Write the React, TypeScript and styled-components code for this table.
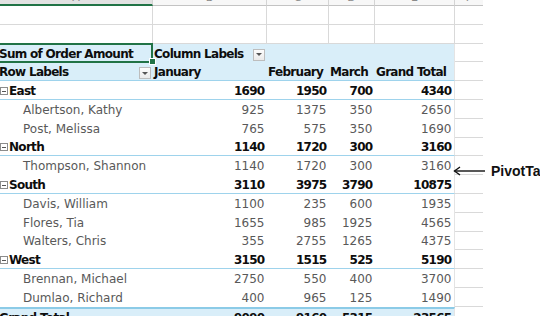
import React from 'react';
import styled, { createGlobalStyle, css } from 'styled-components';

const GlobalStyle = createGlobalStyle`
  html, body {
    margin: 0;
    padding: 0;
    background: #ffffff;
    overflow: hidden;
  }
  body {
    font-family: 'DejaVu Sans', 'Liberation Sans', sans-serif;
  }
`;

const COLS = '153px 114px 62px 46px 80px 28px';
const BLUE_BG = '#d9eef9';
const BLUE_LINE = '#9ed3ec';
const GRID = '#d9d9d9';

type Kind = 'head' | 'headLine' | 'region' | 'item' | 'total';

interface Line {
  name: string;
  values: number[];
}

interface Region extends Line {
  items: Line[];
}

const regions: Region[] = [
  {
    name: 'East',
    values: [1690, 1950, 700, 4340],
    items: [
      { name: 'Albertson, Kathy', values: [925, 1375, 350, 2650] },
      { name: 'Post, Melissa', values: [765, 575, 350, 1690] },
    ],
  },
  {
    name: 'North',
    values: [1140, 1720, 300, 3160],
    items: [{ name: 'Thompson, Shannon', values: [1140, 1720, 300, 3160] }],
  },
  {
    name: 'South',
    values: [3110, 3975, 3790, 10875],
    items: [
      { name: 'Davis, William', values: [1100, 235, 600, 1935] },
      { name: 'Flores, Tia', values: [1655, 985, 1925, 4565] },
      { name: 'Walters, Chris', values: [355, 2755, 1265, 4375] },
    ],
  },
  {
    name: 'West',
    values: [3150, 1515, 525, 5190],
    items: [
      { name: 'Brennan, Michael', values: [2750, 550, 400, 3700] },
      { name: 'Dumlao, Richard', values: [400, 965, 125, 1490] },
    ],
  },
];

const grandTotal = [9090, 9160, 5315, 23565];
const months = ['January', 'February', 'March', 'Grand Total'];

const App = (): JSX.Element => {
  return (
    <>
      <GlobalStyle />
      <Page>
        <ColumnHeads>
          {['A', 'B', 'C', 'D', 'E', 'F'].map((letter, i) => (
            <ColHead key={letter} $selected={i === 0} $last={i === 5}>
              <span>{letter}</span>
            </ColHead>
          ))}
        </ColumnHeads>

        {[0, 1].map((r) => (
          <SheetRow key={r}>
            {[0, 1, 2, 3, 4, 5].map((c) => (
              <GridCell key={c} $last={c === 5} />
            ))}
          </SheetRow>
        ))}

        <SheetRow>
          <PivotCell $kind="head" $selected>
            <Label>Sum of Order Amount</Label>
          </PivotCell>
          <PivotCell $kind="head" $pad>
            <Label>Column Labels</Label>
            <FilterButton />
          </PivotCell>
          <PivotCell $kind="head" />
          <PivotCell $kind="head" />
          <PivotCell $kind="head" $edge />
          <GridCell $last />
        </SheetRow>

        <SheetRow>
          <PivotCell $kind="headLine">
            <Label>Row Labels</Label>
            <FilterButton />
          </PivotCell>
          {months.map((m, i) => (
            <PivotCell key={m} $kind="headLine" $pad $edge={i === 3}>
              <Label>{m}</Label>
            </PivotCell>
          ))}
          <GridCell $last />
        </SheetRow>

        {regions.map((region) => (
          <React.Fragment key={region.name}>
            <SheetRow>
              <PivotCell $kind="region">
                <Collapse />
                <Label>{region.name}</Label>
              </PivotCell>
              {region.values.map((v, i) => (
                <PivotCell key={i} $kind="region" $num $edge={i === 3}>
                  {v}
                </PivotCell>
              ))}
              <GridCell $last />
            </SheetRow>
            {region.items.map((item) => (
              <SheetRow key={item.name}>
                <PivotCell $kind="item" $indent>
                  <Label>{item.name}</Label>
                </PivotCell>
                {item.values.map((v, i) => (
                  <PivotCell key={i} $kind="item" $num $edge={i === 3}>
                    {v}
                  </PivotCell>
                ))}
                <GridCell $last />
              </SheetRow>
            ))}
          </React.Fragment>
        ))}

        <SheetRow>
          <PivotCell $kind="total">
            <Label>Grand Total</Label>
          </PivotCell>
          {grandTotal.map((v, i) => (
            <PivotCell key={i} $kind="total" $num $edge={i === 3}>
              {v}
            </PivotCell>
          ))}
          <GridCell $last />
        </SheetRow>

        <Callout>
          <svg width="32" height="10" viewBox="0 0 32 10">
            <line x1="1.5" y1="5" x2="32" y2="5" stroke="#111" strokeWidth="1.4" />
            <polyline
              points="7,1 1.5,5 7,9"
              fill="none"
              stroke="#111"
              strokeWidth="1.4"
            />
          </svg>
          <CalloutText>PivotTable</CalloutText>
        </Callout>
      </Page>
    </>
  );
};

const Page = styled.div`
  position: relative;
  width: 540px;
  height: 316px;
  overflow: hidden;
  background: #ffffff;
`;

const ColumnHeads = styled.div`
  display: grid;
  grid-template-columns: ${COLS};
  height: 6px;
`;

const ColHead = styled.div<{ $selected?: boolean; $last?: boolean }>`
  box-sizing: border-box;
  height: 6px;
  overflow: hidden;
  text-align: center;
  background: ${(p) => (p.$selected ? '#e2e2e2' : '#f7f7f7')};
  border-bottom: ${(p) => (p.$selected ? '2px solid #217346' : '1.5px solid #c3c3c3')};
  border-right: ${(p) => (p.$last ? 'none' : '1px solid #d4d4d4')};
  color: #8a8a8a;
  font-size: 11px;
  line-height: 6px;
  span {
    display: block;
    margin-top: -5px;
  }
`;

const SheetRow = styled.div`
  display: grid;
  grid-template-columns: ${COLS};
  height: 18.8px;
`;

const GridCell = styled.div<{ $last?: boolean }>`
  box-sizing: border-box;
  height: 18.8px;
  border-bottom: 1px solid ${GRID};
  border-right: ${(p) => (p.$last ? 'none' : `1px solid ${GRID}`)};
`;

const kindStyles: Record<Kind, ReturnType<typeof css>> = {
  head: css`
    background: ${BLUE_BG};
  `,
  headLine: css`
    background: ${BLUE_BG};
    border-bottom: 1px solid ${BLUE_LINE};
  `,
  region: css`
    background: #ffffff;
    border-bottom: 1px solid ${BLUE_LINE};
  `,
  item: css`
    background: #ffffff;
    color: #595959;
    font-weight: 400;
    letter-spacing: 0;
  `,
  total: css`
    background: ${BLUE_BG};
    border-top: 2px solid #8ccbe7;
  `,
};

const PivotCell = styled.div<{
  $kind: Kind;
  $num?: boolean;
  $pad?: boolean;
  $indent?: boolean;
  $edge?: boolean;
  $selected?: boolean;
}>`
  box-sizing: border-box;
  height: 18.8px;
  display: flex;
  align-items: center;
  justify-content: ${(p) => (p.$num ? 'flex-end' : 'flex-start')};
  padding-left: ${(p) => (p.$indent ? '24px' : p.$pad ? '2px' : '0')};
  padding-right: ${(p) => (p.$num ? '2.5px' : '0')};
  padding-top: 1px;
  white-space: nowrap;
  font-size: 12px;
  line-height: 18px;
  color: #0d0d0d;
  font-weight: 700;
  letter-spacing: -0.7px;
  border-right: ${(p) => (p.$edge ? '1px solid #e4e4e4' : 'none')};
  ${(p) => kindStyles[p.$kind]}
  ${(p) =>
    p.$selected &&
    css`
      position: relative;
      &::before {
        content: '';
        position: absolute;
        left: -4px;
        top: -1px;
        right: 0;
        bottom: -1px;
        border: 2px solid #217346;
      }
      &::after {
        content: '';
        position: absolute;
        right: -3px;
        bottom: -3px;
        width: 5px;
        height: 5px;
        background: #217346;
        border: 1px solid #ffffff;
        z-index: 2;
      }
    `}
`;

const Label = styled.span`
  margin-left: -1px;
`;

const FilterButton = styled.i`
  box-sizing: border-box;
  flex-shrink: 0;
  width: 12px;
  height: 12px;
  margin: 3px 2px 0 auto;
  border: 1px solid #bdbdbd;
  background: linear-gradient(#fdfdfd, #eaeaea);
  display: flex;
  align-items: center;
  justify-content: center;
  &::after {
    content: '';
    border-left: 3px solid transparent;
    border-right: 3px solid transparent;
    border-top: 3px solid #555555;
  }
`;

const Collapse = styled.i`
  box-sizing: border-box;
  flex-shrink: 0;
  width: 8px;
  height: 8px;
  margin: 1px 2px 0 0;
  border: 1px solid #8c8c8c;
  display: flex;
  align-items: center;
  justify-content: center;
  &::after {
    content: '';
    width: 4px;
    height: 1px;
    background: #555555;
  }
`;

const Callout = styled.div`
  position: absolute;
  left: 453px;
  top: 163px;
  display: flex;
  align-items: center;
  gap: 6px;
  white-space: nowrap;
`;

const CalloutText = styled.span`
  font-family: 'Liberation Sans', Arial, sans-serif;
  font-weight: 700;
  font-size: 14px;
  color: #111111;
`;

export default App;
